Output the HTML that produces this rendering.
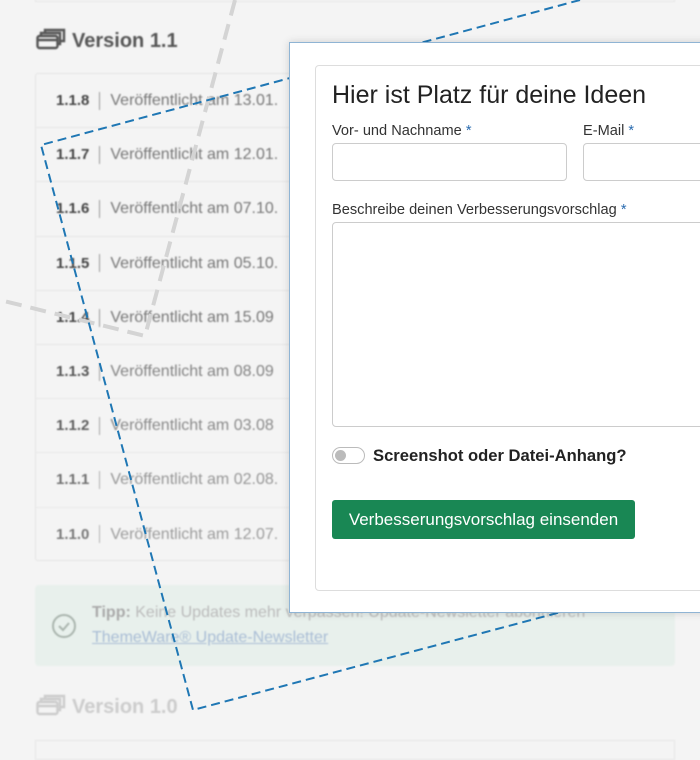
<!DOCTYPE html>
<html><head><meta charset="utf-8"><style>
*{box-sizing:border-box;margin:0;padding:0}
body{width:700px;height:750px;overflow:hidden;background:#f4f4f4;font-family:"Liberation Sans",sans-serif;position:relative}
#bg{position:absolute;inset:0;filter:blur(0.8px)}
.topbox{position:absolute;left:35px;top:-10px;width:640px;height:12px;border:1px solid #e6e6e6;background:#f4f4f4}
.vh{position:absolute;left:36px;font-size:20px;font-weight:bold;color:#555}
.list{position:absolute;left:35px;top:73px;width:640px;height:488px;border:1px solid #e4e4e4;border-radius:3px;background:#f4f4f4}
.row{height:54.2px;border-bottom:1px solid #e6e6e6;padding-left:20px;line-height:54px;font-size:16px;color:#777}
.row b{color:#444;font-weight:bold;font-size:15px}
.row i{display:inline-block;width:1px;height:18px;background:#999;vertical-align:middle;margin:0 10px}
.tipp{position:absolute;left:35px;top:585px;width:640px;height:81px;background:#e8f0ec;border-radius:4px;color:#bbb;font-size:16px}
.modal{position:absolute;left:289px;top:42px;width:430px;height:571px;background:#fff;border:1px solid #8fb4d4;box-shadow:0 0 8px rgba(0,0,0,.15)}
.card{position:absolute;left:315px;top:65px;width:400px;height:526px;border:1px solid #ddd;border-radius:4px;background:#fff}
.t{position:absolute;color:#222}
label{position:absolute;font-size:14.6px;color:#333}
label span{color:#2b6cb0}
.inp{position:absolute;border:1px solid #ccc;border-radius:4px;background:#fff}
</style></head><body>
<div id="bg">
<div class="topbox"></div>
<div class="vh" style="top:28px"><svg width="30" height="22" viewBox="0 0 30 22" style="vertical-align:-3px;margin-right:6px"><g fill="none" stroke="#555" stroke-width="2.4"><rect x="1.5" y="8" width="20" height="12" rx="2"/><path d="M5 8V5h19v11h-2M9 5V2h19v11h-4"/><path d="M1.5 12h20"/></g></svg>Version 1.1</div>
<div class="list">
<div class="row"><b>1.1.8</b><i></i>Veröffentlicht am 13.01.</div>
<div class="row"><b>1.1.7</b><i></i>Veröffentlicht am 12.01.</div>
<div class="row"><b>1.1.6</b><i></i>Veröffentlicht am 07.10.</div>
<div class="row"><b>1.1.5</b><i></i>Veröffentlicht am 05.10.</div>
<div class="row"><b>1.1.4</b><i></i>Veröffentlicht am 15.09</div>
<div class="row" style="opacity:.9"><b>1.1.3</b><i></i>Veröffentlicht am 08.09</div>
<div class="row" style="opacity:.85"><b>1.1.2</b><i></i>Veröffentlicht am 03.08</div>
<div class="row" style="opacity:.75"><b>1.1.1</b><i></i>Veröffentlicht am 02.08.</div>
<div class="row" style="opacity:.7;border:none"><b>1.1.0</b><i></i>Veröffentlicht am 12.07.</div>
</div>
<div class="tipp">
<svg width="26" height="26" viewBox="0 0 26 26" style="position:absolute;left:16px;top:28px"><circle cx="13" cy="13" r="11" fill="none" stroke="#aab5ae" stroke-width="2"/><path d="M8 13l4 4 6-7" fill="none" stroke="#aab5ae" stroke-width="2"/></svg>
<div style="position:absolute;left:57px;top:19px"><b style="color:#aaa">Tipp:</b> Keine Updates mehr verpassen! Update-Newsletter abonnieren</div>
<div style="position:absolute;left:57px;top:44px;color:#a9bdd5;text-decoration:underline">ThemeWare® Update-Newsletter</div>
</div>
<div class="vh" style="top:694px;color:#ccc"><svg width="30" height="22" viewBox="0 0 30 22" style="vertical-align:-3px;margin-right:6px"><g fill="none" stroke="#ccc" stroke-width="2.4"><rect x="1.5" y="8" width="20" height="12" rx="2"/><path d="M5 8V5h19v11h-2M9 5V2h19v11h-4"/><path d="M1.5 12h20"/></g></svg>Version 1.0</div>
<div style="position:absolute;left:35px;top:740px;width:640px;height:20px;border:1px solid #e6e6e6"></div>
</div>
<svg width="700" height="750" style="position:absolute;left:0;top:0">
<g fill="none" stroke="#d4d4d4" stroke-width="4" stroke-dasharray="16 9"><path d="M235 0L145 336L0 300"/></g>
<path d="M580 0L41 145L193 710L700 575" fill="none" stroke="#1f77b4" stroke-width="2" stroke-dasharray="9 5"/>
</svg>
<div class="modal"></div>
<div class="card"></div>
<div class="t" style="left:332px;top:81px;font-size:25px">Hier ist Platz für deine Ideen</div>
<label style="left:332px;top:123px">Vor- und Nachname <span>*</span></label>
<label style="left:583px;top:123px">E-Mail <span>*</span></label>
<div class="inp" style="left:332px;top:143px;width:235px;height:38px"></div>
<div class="inp" style="left:583px;top:143px;width:140px;height:38px"></div>
<label style="left:332px;top:202px">Beschreibe deinen Verbesserungsvorschlag <span>*</span></label>
<div class="inp" style="left:332px;top:222px;width:400px;height:205px"></div>
<div style="position:absolute;left:332px;top:447px;width:33px;height:17px;border:1px solid #bbb;border-radius:9px"><div style="position:absolute;left:2px;top:2px;width:11px;height:11px;border-radius:50%;background:#bbb"></div></div>
<div class="t" style="left:373px;top:446px;font-size:16.6px;font-weight:bold;color:#222">Screenshot oder Datei-Anhang?</div>
<div style="position:absolute;left:332px;top:500px;width:303px;height:39px;background:#198754;border-radius:3px;color:#fff;font-size:17px;line-height:39px;text-align:center">Verbesserungsvorschlag einsenden</div>
</body></html>
